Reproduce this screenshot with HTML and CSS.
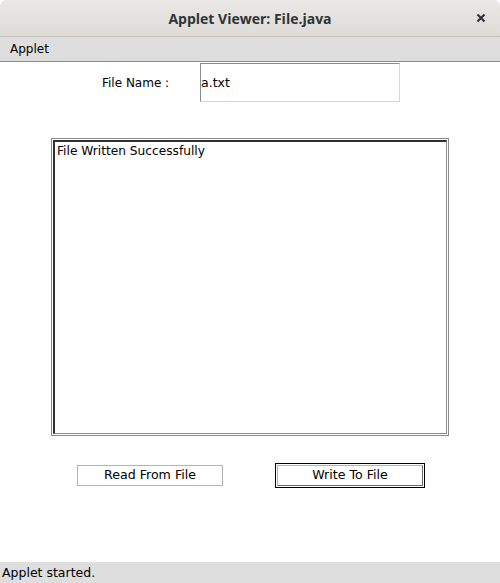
FILE: index.html
```html
<!DOCTYPE html>
<html>
<head>
<meta charset="utf-8">
<link rel="stylesheet" href="styles.css">
</head>
<body>
<div class="window">
  <div class="titlebar">
    <span class="title">Applet Viewer: File.java</span>
    <svg class="close" width="10" height="10" viewBox="0 0 10 10"><path d="M1.5 1.5 L8.5 8.5 M8.5 1.5 L1.5 8.5" stroke="#2e3436" stroke-width="2.2" stroke-linecap="butt"/></svg>
  </div>
  <div class="menubar"><span class="menu">Applet</span></div>
  <div class="content">
    <div class="row-name">
      <span class="label">File Name :</span>
      <div class="field">a.txt</div>
    </div>
    <div class="area-outer">
      <div class="area">File Written Successfully</div>
    </div>
    <div class="buttons">
      <div class="btn">Read From File</div>
      <div class="btn-focus"><div class="btn inner">Write To File</div></div>
    </div>
  </div>
  <div class="status">Applet started.</div>
</div>
</body>
</html>
```
FILE: styles.css
```css
html, body { margin: 0; padding: 0; background: #ffffff; }
.window {
  width: 500px; height: 583px;
  display: flex; flex-direction: column;
  font-family: "DejaVu Sans", sans-serif;
  font-size: 12px; color: #000;
}
.titlebar {
  height: 36px; flex: none;
  background: linear-gradient(#eae8e5, #dedbd7);
  border-bottom: 1px solid #c3beb8;
  border-radius: 6px 6px 0 0;
  position: relative;
  display: flex; align-items: center; justify-content: center;
}
.title { font-family: "Open Sans", "DejaVu Sans", sans-serif; font-weight: bold; font-size: 14px; color: #2e3436; }
.close { position: absolute; right: 14px; top: 13px; }
.menubar {
  height: 24px; flex: none;
  background: #dedede;
  border-bottom: 1px solid #8a8a8a;
  display: flex; align-items: center;
  padding-left: 10px;
  font-size: 12px;
}
.content { flex: 1; display: flex; flex-direction: column; }
.row-name { display: flex; align-items: center; height: 39px; margin-top: 1px; }
.label { margin-left: 102px; width: 98px; font-size: 12px; }
.field {
  box-sizing: border-box; width: 200px; height: 39px;
  border-top: 1px solid #8a8a8a; border-left: 1px solid #8a8a8a;
  border-right: 1px solid #d8d8d8; border-bottom: 1px solid #d8d8d8;
  display: flex; align-items: center; font-size: 12.5px; padding-left: 0;
}
.area-outer {
  margin: 36px 0 0 51px; width: 398px; height: 298px; box-sizing: border-box;
  border: 1px solid #8a8a8a; padding: 1px;
}
.area {
  height: 100%; box-sizing: border-box;
  border-top: 2px solid #303030; border-left: 2px solid #303030;
  border-right: 1px solid #8a8a8a; border-bottom: 1px solid #8a8a8a;
  padding: 2px 0 0 2px; font-size: 12.2px;
}
.buttons { display: flex; align-items: center; margin-top: 26px; height: 26px; }
.btn {
  box-sizing: border-box; width: 146px; height: 21px; margin-left: 77px;
  border: 1px solid #b4b4b4; padding-bottom: 2px;
  display: flex; align-items: center; justify-content: center; font-size: 12.6px;
}
.btn-focus {
  box-sizing: border-box; width: 150px; height: 25px; margin-left: 52px;
  border: 1px solid #000; padding: 1px;
}
.btn.inner { margin: 0; width: 100%; height: 100%; border-color: #b4b4b4 #6a6a6a #6a6a6a #b4b4b4; }
.status {
  height: 21px; flex: none; background: #dedede;
  display: flex; align-items: center; padding-left: 2px; font-size: 12.5px;
}
```
